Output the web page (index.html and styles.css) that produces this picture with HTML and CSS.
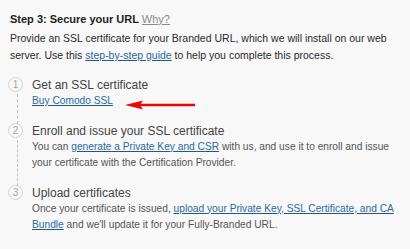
FILE: index.html
```html
<!DOCTYPE html>
<html lang="en">
<head>
  <meta charset="UTF-8">
  <title>Secure your URL</title>
  <link rel="stylesheet" href="styles.css">
</head>
<body>

<div class="seccion">
  <h3 class="titulo">Step 3: Secure your URL <a href="#" class="porque">Why?</a></h3>
  <p class="intro">Provide an SSL certificate for your Branded URL, which we will install on our web server. Use this <a href="#">step-by-step guide</a> to help you complete this process.</p>

  <ol class="pasos">
    <li class="paso">
      <span class="numero">1</span>
      <div class="cuerpo">
        <div class="paso-titulo">Get an SSL certificate</div>
        <div class="paso-texto">
          <a href="#">Buy Comodo SSL</a><svg class="flecha" width="70" height="10" viewBox="0 0 70 10">
            <path d="M14 5 H70" stroke="#e8070b" stroke-width="2.4"/>
            <path d="M0 5 L18 0.5 L15 5 L18 9.5 Z" fill="#e8070b"/>
          </svg>
        </div>
      </div>
    </li>
    <li class="paso">
      <span class="numero">2</span>
      <div class="cuerpo">
        <div class="paso-titulo">Enroll and issue your SSL certificate</div>
        <div class="paso-texto">You can <a href="#">generate a Private Key and CSR</a> with us, and use it to enroll and issue your certificate with the Certification Provider.</div>
      </div>
    </li>
    <li class="paso">
      <span class="numero">3</span>
      <div class="cuerpo">
        <div class="paso-titulo">Upload certificates</div>
        <div class="paso-texto">Once your certificate is issued, <a href="#">upload your Private Key, SSL Certificate, and CA Bundle</a> and we'll update it for your Fully-Branded URL.</div>
      </div>
    </li>
  </ol>
</div>

</body>
</html>
```

FILE: styles.css
```css
body {
  margin: 0;
  background: #f8f8f8;
  font-family: "Liberation Sans", Arial, sans-serif;
  color: #333;
}
a { color: #2a6a9e; text-decoration: underline; text-decoration-color: #1d5a8a; }
.seccion { padding: 11px 10px 0 10px; }
.titulo {
  margin: 0 0 3px 0;
  font-size: 11px;
  line-height: 16px;
  font-weight: bold;
  color: #222;
}
.titulo .porque { font-weight: normal; color: #8a8a8a; text-decoration-color: #8a8a8a; }
.intro {
  margin: 0 0 13px 0;
  font-size: 10.5px;
  line-height: 17px;
  color: #2a2a2a;
}
.pasos { list-style: none; margin: 0; padding: 0; }
.paso {
  position: relative;
  display: flex;
  gap: 9px;
  padding-bottom: 13px;
}
.paso:not(:last-child)::before {
  content: "";
  position: absolute;
  left: 7px;
  top: 17px;
  bottom: -1px;
  border-left: 1px dashed #c4c4c4;
}
.numero {
  flex: none;
  width: 13px;
  height: 13px;
  margin-left: -2px;
  border: 1.5px solid #d4d4d4;
  border-radius: 50%;
  font-size: 10px;
  line-height: 13px;
  text-align: center;
  color: #a4a4a4;
}
.paso-titulo {
  font-size: 12px;
  line-height: 16px;
  color: #444;
}
.paso-texto {
  font-size: 10.2px;
  line-height: 16.5px;
  color: #555;
}
.flecha { position: relative; top: 2px; margin-left: 12px; vertical-align: -4px; }
```
